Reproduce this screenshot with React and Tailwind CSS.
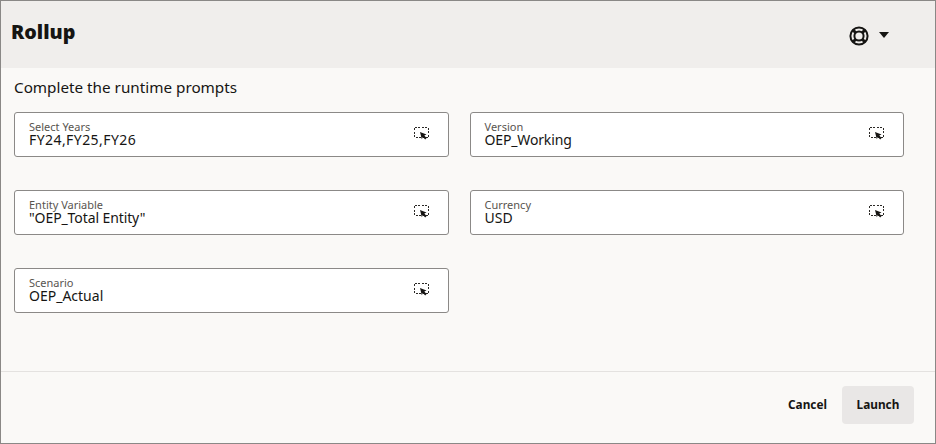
function PickerIcon() {
  return (
    <svg width="18" height="16" viewBox="0 0 18 16" className="block">
      <rect x="0.5" y="0.5" width="14" height="10" fill="none" stroke="#2b2926" strokeWidth="1" strokeDasharray="2 1.5" shapeRendering="crispEdges" />
      <path d="M6 5 L12.5 7.5 L10.3 8.6 L12.6 11 L11.2 12.4 L8.9 10 L7.8 12.2 Z" fill="#161513" />
    </svg>
  );
}

function LifeRing() {
  return (
    <svg width="20" height="20" viewBox="0 0 20 20" fill="none" stroke="#161513" strokeWidth="2" className="block">
      <circle cx="10" cy="10" r="8.6" />
      <circle cx="10" cy="10" r="4.6" />
      <path d="M3.7 3.7 L6.8 6.8 M16.3 3.7 L13.2 6.8 M3.7 16.3 L6.8 13.2 M16.3 16.3 L13.2 13.2" strokeWidth="3" />
    </svg>
  );
}

function Field({ label, value, valueClass = "" }) {
  return (
    <div className="flex h-[45px] items-start justify-between rounded-[3px] border border-[#8b8987] bg-white pl-[14px] pr-[16px]">
      <div className="pt-[8px]">
        <div className="text-[11px] leading-[11px] text-[#58544f]">{label}</div>
        <div className={`text-[14px] leading-[16px] text-[#161513] ${valueClass}`}>{value}</div>
      </div>
      <div className="pt-[14px]">
        <PickerIcon />
      </div>
    </div>
  );
}

export default function App() {
  const font = { fontFamily: '"Noto Sans", sans-serif' };
  return (
    <div style={font} className="flex h-[444px] w-[936px] flex-col border border-[#8a8886] bg-[#faf9f7]">
      <header className="flex h-[67px] items-start justify-between bg-[#f0eeec] pl-[10px] pr-[46px]">
        <h1 className="pt-[17px] text-[19.7px] font-black leading-[28px] text-[#161513]">Rollup</h1>
        <div className="flex items-center gap-[10px] pt-[25px]">
          <LifeRing />
          <div className="h-0 w-0 -translate-y-[1px] border-x-[5px] border-t-[6px] border-x-transparent border-t-[#161513]" />
        </div>
      </header>
      <main className="flex-1 pl-[13px] pr-[31px]">
        <p className="pt-[8px] text-[15.25px] leading-[22px] text-[#161513]">Complete the runtime prompts</p>
        <div className="mt-[14px] grid grid-cols-2 gap-x-[21px] gap-y-[33px]">
          <Field label="Select Years" value="FY24,FY25,FY26" valueClass="tracking-[0.43px]" />
          <Field label="Version" value="OEP_Working" valueClass="tracking-[-0.15px]" />
          <Field label="Entity Variable" value={'"OEP_Total Entity"'} valueClass="tracking-[-0.1px]" />
          <Field label="Currency" value="USD" />
          <Field label="Scenario" value="OEP_Actual" />
        </div>
      </main>
      <footer className="flex h-[72px] items-start justify-end gap-[15px] border-t border-[#e4e2e0] pr-[21px] pt-[14px]">
        <button className="h-[38px] text-[11.8px] font-bold text-[#161513]">Cancel</button>
        <button className="h-[38px] w-[72px] rounded-[4px] bg-[#e9e7e6] text-[11.8px] font-bold text-[#161513]">Launch</button>
      </footer>
    </div>
  );
}
